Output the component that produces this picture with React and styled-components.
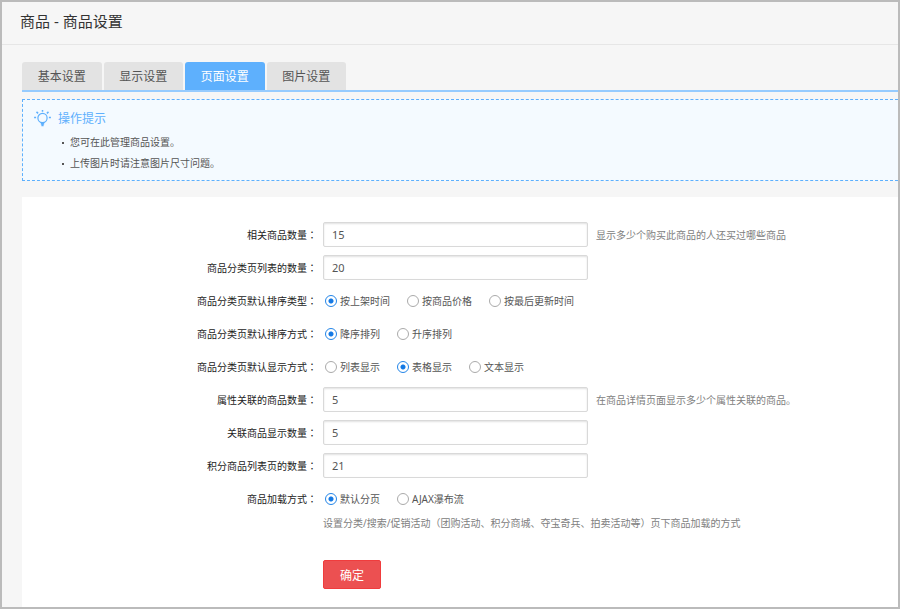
import React, { useState } from "react";
import styled, { createGlobalStyle } from "styled-components";

const GlobalStyle = createGlobalStyle`
  *, *::before, *::after { box-sizing: border-box; }
  html, body { margin: 0; padding: 0; }
  body, button, input {
    font-family: "Noto Sans", "Noto Sans CJK SC", sans-serif;
  }
`;

const Page = styled.div`
  display: flex;
  flex-direction: column;
  min-height: 100vh;
  border: 2px solid #bbbbbb;
  background: #f6f6f6;
  color: #555;
  font-size: 10px;
`;

const Header = styled.header`
  padding: 8px 18px 12px;
  border-bottom: 1px solid #e6e6e6;
`;

const Title = styled.h1`
  margin: 0;
  color: #333;
  font-size: 15px;
  font-weight: 400;
  line-height: 22px;
`;

const Content = styled.main`
  display: flex;
  flex: 1;
  flex-direction: column;
  padding: 17px 0 0 20px;
`;

const TabBar = styled.nav`
  border-bottom: 2px solid #96cbfe;
`;

const TabList = styled.div`
  display: flex;
  gap: 2px;
  max-width: 324px;
`;

const Tab = styled.button`
  flex: 1;
  height: 28px;
  padding: 1px 0 0;
  border: 0;
  border-radius: 3px 3px 0 0;
  background: ${(p) => (p.$active ? "#5eb0fd" : "#e3e3e3")};
  color: ${(p) => (p.$active ? "#fff" : "#555")};
  font-size: 12px;
  line-height: 27px;
  cursor: pointer;
`;

const Tips = styled.section`
  margin-top: 7px;
  padding: 8px 12px 6px 11px;
  border: 1px dashed #5eb0fd;
  border-right: 0;
  background: #f4faff;
`;

const TipsHeading = styled.h2`
  display: flex;
  align-items: center;
  gap: 7px;
  margin: 0;
  color: #5eb0fd;
  font-size: 12px;
  font-weight: 400;
  line-height: 21px;
`;

const TipsList = styled.ul`
  margin: 3px 0 0;
  padding: 0 0 0 28px;
  list-style: none;
`;

const Tip = styled.li`
  display: flex;
  align-items: center;
  gap: 6px;
  line-height: 21px;

  &::before {
    content: "";
    width: 2px;
    height: 2px;
    background: #555;
  }
`;

const Panel = styled.form`
  flex: 1;
  margin-top: 16px;
  padding: 21px 0 18px;
  background: #fff;
`;

const Row = styled.div`
  display: grid;
  grid-template-columns: 295px 1fr;
  column-gap: 6px;
  align-items: center;
  min-height: 33px;
`;

const FieldName = styled.label`
  color: #222;
  line-height: 20px;
  text-align: right;
`;

const Colon = styled.span`
  font-family: "Noto Sans CJK TC", sans-serif;
`;

const Field = styled.div`
  display: flex;
  align-items: center;
  gap: 8px;
`;

const TextInput = styled.input`
  flex: 0 1 265px;
  min-width: 0;
  height: 25px;
  padding: 0 8px;
  border: 1px solid #d9d9d9;
  border-radius: 2px;
  background: #fff;
  box-shadow: inset 0 1px 2px rgba(0, 0, 0, 0.12);
  color: #555;
  font-size: 11px;
  outline: none;
`;

const Hint = styled.span`
  color: #808080;
  line-height: 16px;
`;

const RadioGroup = styled.div`
  display: flex;
  gap: 17px;
  padding-left: 2px;
`;

const RadioLabel = styled.label`
  display: flex;
  align-items: center;
  gap: 3px;
  line-height: 16px;
  cursor: pointer;
`;

const Radio = styled.input`
  appearance: none;
  width: 12px;
  height: 12px;
  margin: 0;
  border: 1px solid #aaa;
  border-radius: 50%;
  background: #fff;

  &:checked {
    border-color: #2385e8;
    background: radial-gradient(circle, #1479e4 2px, #fff 3px);
  }
`;

const FormFooter = styled.div`
  display: flex;
  flex-direction: column;
  align-items: flex-start;
  gap: 29px;
  padding-left: 301px;
`;

const Submit = styled.button`
  width: 58px;
  height: 29px;
  padding: 0;
  border: 1px solid #f03c3d;
  border-radius: 2px;
  background: #ec5051;
  color: #fff;
  font-size: 12px;
  cursor: pointer;
`;

function BulbIcon() {
  return (
    <svg width="17" height="17" viewBox="0 0 17 17" fill="none" stroke="#5eb0fd" aria-hidden="true">
      <circle cx="8.5" cy="8" r="4.6" strokeWidth="1.2" />
      <path d="M6.8 13.6h3.4M7.4 15.4h2.2" strokeWidth="1.6" />
      <path d="M8.5 0v1.8M2.5 1.9l1.6 1.5M14.5 1.9l-1.6 1.5M.1 7.4h2M14.9 7.4h2" strokeWidth="1.5" />
    </svg>
  );
}

const tabs = ["基本设置", "显示设置", "页面设置", "图片设置"];
const tips = ["您可在此管理商品设置。", "上传图片时请注意图片尺寸问题。"];

const fields = [
  { id: "related", name: "相关商品数量", value: "15", hint: "显示多少个购买此商品的人还买过哪些商品" },
  { id: "page-size", name: "商品分类页列表的数量", value: "20" },
  { id: "sort-type", name: "商品分类页默认排序类型", options: ["按上架时间", "按商品价格", "按最后更新时间"], selected: 0 },
  { id: "sort-order", name: "商品分类页默认排序方式", options: ["降序排列", "升序排列"], selected: 0 },
  { id: "display", name: "商品分类页默认显示方式", options: ["列表显示", "表格显示", "文本显示"], selected: 1 },
  { id: "attribute", name: "属性关联的商品数量", value: "5", hint: "在商品详情页面显示多少个属性关联的商品。" },
  { id: "linked", name: "关联商品显示数量", value: "5" },
  { id: "points", name: "积分商品列表页的数量", value: "21" },
  { id: "loading", name: "商品加载方式", options: ["默认分页", "AJAX瀑布流"], selected: 0 },
];

function FormRow({ field }) {
  const { id, name, value, hint, options, selected } = field;
  const labelId = `${id}-label`;
  return (
    <Row>
      <FieldName id={labelId} as={options ? "span" : undefined} htmlFor={options ? undefined : id}>
        {name}
        <Colon lang="zh-TW">：</Colon>
      </FieldName>
      {options ? (
        <RadioGroup role="radiogroup" aria-labelledby={labelId}>
          {options.map((option, i) => (
            <RadioLabel key={option}>
              <Radio type="radio" name={id} defaultChecked={i === selected} />
              {option}
            </RadioLabel>
          ))}
        </RadioGroup>
      ) : (
        <Field>
          <TextInput id={id} type="text" defaultValue={value} />
          {hint && <Hint>{hint}</Hint>}
        </Field>
      )}
    </Row>
  );
}

export default function App() {
  const [active, setActive] = useState(2);
  return (
    <>
      <GlobalStyle />
      <Page lang="zh-CN">
        <Header>
          <Title>商品 - 商品设置</Title>
        </Header>
        <Content>
          <TabBar>
            <TabList role="tablist">
              {tabs.map((tab, i) => (
                <Tab key={tab} type="button" role="tab" aria-selected={i === active} $active={i === active} onClick={() => setActive(i)}>
                  {tab}
                </Tab>
              ))}
            </TabList>
          </TabBar>
          <Tips>
            <TipsHeading>
              <BulbIcon />
              操作提示
            </TipsHeading>
            <TipsList>
              {tips.map((tip) => (
                <Tip key={tip}>{tip}</Tip>
              ))}
            </TipsList>
          </Tips>
          <Panel onSubmit={(e) => e.preventDefault()}>
            {fields.map((field) => (
              <FormRow key={field.id} field={field} />
            ))}
            <FormFooter>
              <Hint>设置分类/搜索/促销活动（团购活动、积分商城、夺宝奇兵、拍卖活动等）页下商品加载的方式</Hint>
              <Submit type="submit">确定</Submit>
            </FormFooter>
          </Panel>
        </Content>
      </Page>
    </>
  );
}
